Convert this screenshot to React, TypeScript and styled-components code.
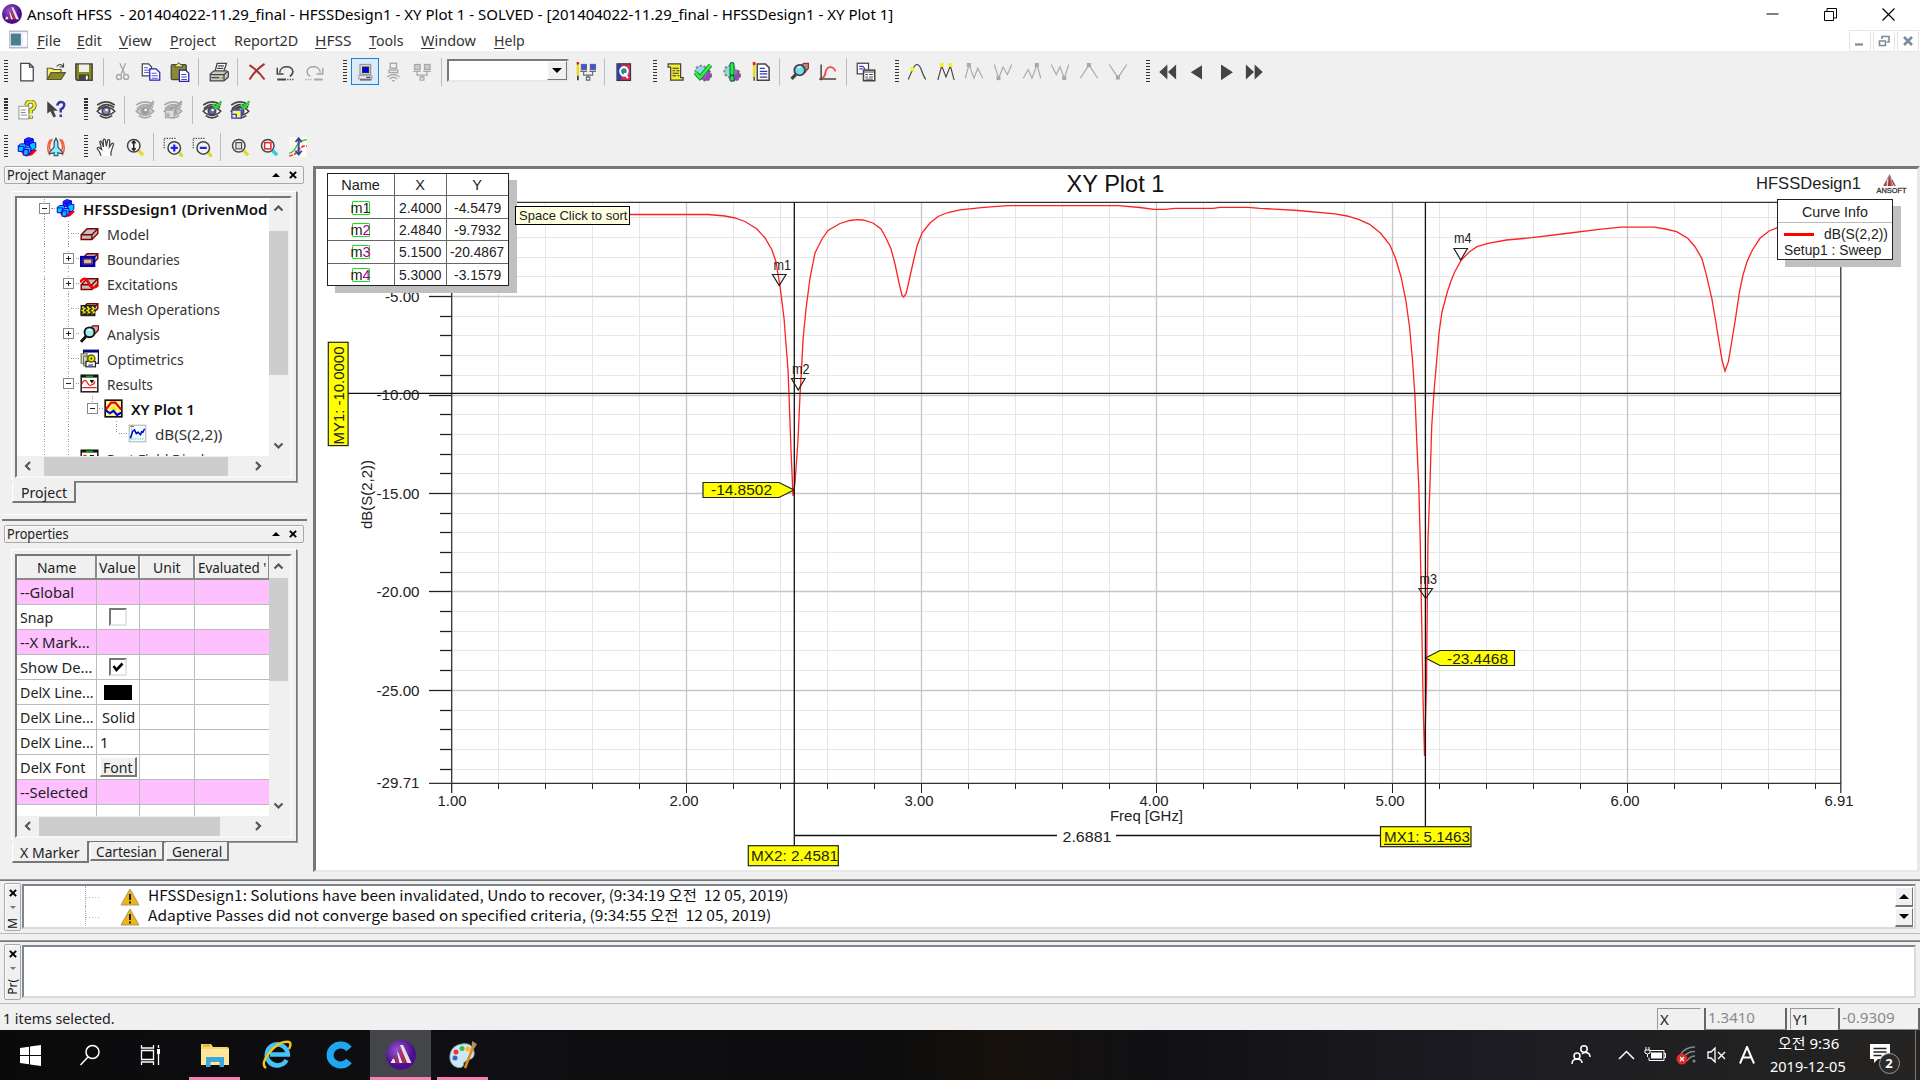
import React, { useLayoutEffect, useRef, useState } from "react";
import styled, { createGlobalStyle, css } from "styled-components";

const UI = `"Noto Sans", "Open Sans", "Noto Sans CJK KR", sans-serif`;
const PLOT = `"Liberation Sans", "Noto Sans CJK KR", sans-serif`;

const Global = createGlobalStyle`
  * { box-sizing: border-box; }
  body { margin: 0; background: #f0f0f0; overflow: hidden; }
`;

/* ---------- text squeezed to a fixed advance width ---------- */
const FitBox = styled.span<{ $w: number }>`
  display: inline-block;
  width: ${(p) => p.$w}px;
  flex: none;
  white-space: pre;
`;
const FitInner = styled.span`
  display: inline-block;
  transform-origin: 0 50%;
`;
const Fit = ({ w, children }: { w: number; children: React.ReactNode }) => {
  const ref = useRef<HTMLSpanElement>(null);
  const [k, setK] = useState(1);
  useLayoutEffect(() => {
    if (ref.current) setK(w / ref.current.offsetWidth);
  }, [w]);
  return (
    <FitBox $w={w}>
      <FitInner ref={ref} style={{ transform: `scaleX(${k})` }}>{children}</FitInner>
    </FitBox>
  );
};

/* ---------- icons ---------- */
const D = "#444";
const G = "#a8a8a8";
const eye = (c: string, iris: string) => (
  <g fill="none" stroke={c} strokeWidth="1.3">
    <path d="M1 4Q8-1 15 4M1.5 7Q8 1 14.5 6" />
    <path d="M1 9Q8 2 15 9Q8 15.500 1 9Z" fill={c === G ? "#ccc" : "#fff"} />
    <circle cx="8" cy="8.700" r="3" fill={iris} />
    <circle cx="8.500" cy="8" r="1" fill="#fff" stroke="none" />
    <path d="M3 12.500Q8 16 13 12.500" />
  </g>
);
const cubes = (
  <g strokeWidth=".8" stroke="#0000e0">
    <path d="M3 12l4 3.500 5-1 4-4-2-1z" fill="#f00" stroke="none" />
    <path d="M6 2l3-1.500 4 1v4l-3 1.500-4-1z" fill="#22f" />
    <path d="M1 7l2-1.500h4v5l-1 1H1z" fill="#0cf" />
    <path d="M10 6l2-1.500h3v4l-2 2h-3z" fill="#0cf" />
    <path d="M5 9.500l2-1.500h4v4l-2 2.500H5z" fill="#2af" />
    <path d="M6 3.500h3.500v3.500M10 3l3-1M1 7.500h4.500v4M5 10h4v4" fill="none" />
  </g>
);
const brick = (
  <g stroke="#800000" strokeWidth="1.200">
    <path d="M1 9l5-5h9v4l-5 5H1z" fill="#c0c0c0" />
    <path d="M1 9h9v4M10 9l5-5" fill="none" />
  </g>
);
const mag = (c: string, inner: React.ReactNode, handle = "#dede20", x = 7, y = 7) => (
  <g>
    <path d={`M${x + 4} ${y + 4}l3.500 3.500`} stroke={handle} strokeWidth="2.800" />
    <circle cx={x} cy={y} r="5" fill="#f4f4f4" stroke={c} strokeWidth="1.200" />
    {inner}
  </g>
);
const net = (c: string, s: string) => (
  <g fill="none" stroke={c} strokeWidth="1">
    <rect x="2" y="2" width="4.500" height="4" fill={s} /><rect x="10" y="2" width="4.500" height="4" fill={s} />
    <path d="M1 7.500h6M9 7.500h6M4 8v2.500h8V8M8 10.500v2" /><rect x="6.500" y="12" width="3" height="2.500" />
  </g>
);
const gears = (
  <g>
    <circle cx="10" cy="10.500" r="4.500" fill="#a040c0" stroke="#666" strokeDasharray="2 1.300" strokeWidth="1.300" />
    <circle cx="6.500" cy="7.500" r="4.600" fill="#8dd" stroke="#888" strokeDasharray="2 1.300" strokeWidth="1.600" />
  </g>
);
const peaks = (d: string, c: string, marks: number[][], m: string) => (
  <g><path d={d} fill="none" stroke={c} strokeWidth=".9" />
    {marks.map(([x, y]) => <rect key={x} x={x - 1.700} y={y - 1.700} width="3.200" height="3.200" fill={m} />)}</g>
);

const icons: Record<string, React.ReactNode> = {
  new: <path d="M3 1h7l3 3v11H3zM10 1v3h3" fill="#fff" stroke={D} />,
  open: <g stroke="#554" strokeWidth=".9"><path d="M1 14V5h4l1 1h6v3" fill="#f6ef6a" /><path d="M1 14l3-5.500h11.500L12 14z" fill="#8b8a1d" /><path d="M8.500 3.500q3-3 5 0M14 1v3h-3" fill="none" stroke={D} /></g>,
  save: <g><path d="M1.500 1.500h13v13h-12l-1-1z" fill="#8a8a18" stroke={D} strokeWidth="1.200" /><rect x="4" y="2" width="8" height="6" fill="#eee" /><rect x="4" y="10" width="8" height="4.500" fill="#444" /><rect x="9.500" y="11" width="1.500" height="3" fill="#fff" /></g>,
  cut: <g fill="none" stroke={G} strokeWidth="1.100"><path d="M5.500 1l4 9M10 1L6.500 10" /><circle cx="4.800" cy="12" r="2" /><circle cx="10.500" cy="12" r="2" /></g>,
  copy: <g fill="#fff"><path d="M1 1.500h5l2.500 2.500v7H1z" stroke={D} /><path d="M7 5.500h5l3 3v6H7z" stroke="#22b" /><path d="M2.500 4.500h3M2.500 6.500h4M2.500 8.500h4M8.500 9h4M8.500 11h5M8.500 13h5" stroke="#55c" strokeWidth=".8" /></g>,
  paste: <g><rect x="1" y="2" width="12" height="12" rx="1" fill="#8b8a30" stroke={D} /><path d="M4 4V2h1.500Q7-.5 8.500 2H10v2z" fill="#e8e060" stroke={D} strokeWidth=".8" /><path d="M7.500 6.500h5l2.500 2.500v6.500H7.500z" fill="#fff" stroke="#22a" /><path d="M9 10h4M9 12h4.500M9 14h4.500" stroke="#44b" strokeWidth=".8" /></g>,
  print: <g stroke={D}><path d="M5 7l1.500-6H14l-2 6" fill="#fff" /><path d="M1 9.500L4 7h10l1.500 1v4L12 15H1z" fill="#c8c8c8" /><path d="M1 10h11l3-2.500M12 10v5M2 12.500h9M7 3h5M6.500 5h5" fill="none" /><path d="M8 12.500h2.500" stroke="#dd0" /></g>,
  del: <path d="M2 2.500Q9 7 14 14M14 1.500Q7 6 2 14" stroke="#a83232" strokeWidth="1.600" fill="none" />,
  undo: <g fill="none" stroke={D} strokeWidth="1.200"><path d="M3 8.500C3 3 13 2 13.500 7.500Q13.500 10 11 11.500M1 4.500v5h5" /><path d="M1 14h7" strokeWidth="1.600" /><path d="M9 14h6" strokeDasharray="1 1" /></g>,
  redo: <g fill="none" stroke={G} strokeWidth="1.200"><path d="M13 8.500C13 3 3 2 2.500 7.500Q2.500 10 5 11.500M15 4.500v5h-5" /><path d="M8 14h7" strokeWidth="1.600" /><path d="M1 14h6" strokeDasharray="1 1" /></g>,
  pc: <g><rect x="4" y="2" width="8.500" height="8" fill="#e0e0e0" stroke="#999" /><rect x="6" y="4" width="5" height="4.500" fill="#00e" stroke="#222" strokeWidth=".7" /><rect x="3" y="11" width="10.500" height="2.500" fill="#f0f0f0" stroke="#999" strokeWidth=".8" /><path d="M4 14.300h9M9 12.300h3.500" stroke="#555" strokeWidth=".9" /></g>,
  remote: <g fill="none" stroke={G} strokeWidth="1.100"><rect x="5" y="1" width="5" height="4" /><rect x="4" y="6.500" width="7" height="2" /><path d="M2.500 12Q7.500 8 12.500 12M4.500 13.500Q7.500 11 10.500 13.500M6.500 15h2" /></g>,
  net: net(G, "#ccc"),
  netEdit: <g><g transform="translate(2.500 0) scale(.9 1)">{net("#667", "#35f")}</g><path d="M1.500 1v10" stroke="#e8d820" strokeWidth="2" /><path d="M1.500 0v2" stroke="#e02020" strokeWidth="2" /><path d="M1.500 11v3.500" stroke="#333" strokeWidth="1.300" /></g>,
  queue: <g transform="translate(1.500 .5) scale(.84 .95)"><rect x="1" y="1" width="13" height="14" fill="#d03050" stroke="#334" /><path d="M1.500 1.500h3.500v13H1.500z" fill="#2244b0" /><circle cx="7.700" cy="7.300" r="3.600" fill="#208aa0" stroke="#fff" strokeWidth="1.900" /><path d="M8 9l3.500 4" stroke="#fff" strokeWidth="1.800" /></g>,
  script: <g><path d="M2.500 1.500h10v11h2v2H4.500V4h-2z" fill="#f4ee30" stroke={D} /><path d="M6 5h5M6 7h2M9 7h2.500M6 9h5M6 11h3M10 11h1.500" stroke="#333" strokeWidth=".9" /></g>,
  check: <g>{gears}<path d="M2 8.500l3.500 4L14 2.500" stroke="#173" strokeWidth="3.600" fill="none" /><path d="M2 8.500l3.500 4L14 2.500" stroke="#3e4" strokeWidth="2.200" fill="none" /></g>,
  bang: <g>{gears}<path d="M8 2v7.500M8 12.300v1.500" stroke="#154" strokeWidth="4" strokeLinecap="round" /><path d="M8 2v7M8 12.500v1" stroke="#2e4" strokeWidth="2.500" strokeLinecap="round" /></g>,
  notes: <g><path d="M5 1.500h6.500l3 3v10H5z" fill="#fff" stroke={D} strokeWidth="1.200" /><path d="M7 5h4M7 7.500h6M7 9.500h6M7 12h6" stroke="#33b" /><path d="M2.500 1.500v11" stroke="#e8d820" strokeWidth="2" /><path d="M2.500 0v2.500" stroke="#e22" strokeWidth="2.200" /><path d="M2.500 12v3" stroke="#333" /></g>,
  solve: <g><path d="M9 3l3-2h3.500v4L13 8z" fill="#b88" stroke="#933" /><circle cx="8.500" cy="6.500" r="4.200" fill="#7de" stroke={D} strokeWidth="1.500" /><path d="M5.500 10L2 13.500" stroke={D} strokeWidth="2.600" /><path d="M7 5q1-1.500 2.500-1" stroke="#fff" fill="none" /></g>,
  plot: <g fill="none"><path d="M2.500 2v12.500M1 13.500h13.500" stroke={D} strokeWidth="1.200" /><path d="M3.500 13Q6 11 6 8Q7 4 10 4Q13 4.500 14 7.500" stroke="#f44" strokeWidth="1.400" /></g>,
  copies: <g stroke={D} fill="#fff"><rect x="1" y="1" width="9" height="8.500" /><path d="M2.500 3.500h3l2 2.500M2.500 5.500h3" stroke="#44d" fill="none" /><rect x="6" y="6.500" width="9" height="8.500" strokeWidth="1.200" /><path d="M6 8h9M7.500 10h2M10.500 10h3M7.500 12h2M10.500 12h3M7.500 13.700h6" strokeWidth=".8" /></g>,
  pk1: peaks("M1 14Q4 7 5 5Q8-1 11 5Q13 11 15 14", D, [[4.300, 6]], "#f6f020"),
  pk2: peaks("M1.500 14.500L4.500 3 8 12 11.500 3 14.500 14.500", D, [[4.700, 2.500], [11.500, 2.500]], "#f6f020"),
  pk3: peaks("M1 13L4 2 8 13 11 5 15 13", G, [[4, 2.500]], G),
  pk4: peaks("M1 2L4.500 13 8 4 11.500 10 15 2", G, [[4.500, 13]], G),
  pk5: peaks("M1 13L5 6 8 13 12 2 15 13", G, [[12, 2.500]], G),
  pk6: peaks("M1 2L5 10 8 4 11.500 13 15 2", G, [[11.500, 13]], G),
  pk7: peaks("M1 13L8 2.500 15 13", G, [[8, 2.500]], G),
  pk8: peaks("M1 2L8 12.500 15 2", G, [[8, 12.500]], G),
  rew: <path d="M7.500 2v12L1 8zM14.500 2v12L8 8z" fill={D} />,
  prev: <path d="M12 2.500v11.500L3 8.200z" fill={D} />,
  next: <path d="M4 2v12.500L13.500 8.200z" fill={D} />,
  ffw: <path d="M1.500 2v12L8 8zM8.500 2v12L15 8z" fill={D} />,
  help: <g><path d="M1.500 5h8v10h-8z" fill="#fff" stroke="#aaa" /><path d="M3 8h4M3 10h4M3 12h5" stroke="#888" strokeWidth=".8" /><path d="M7.500 4.500Q8 1 11 1.200 14.500 1.500 14 5 13.500 7 11 8v2.500M11 12.500v2.500" fill="none" stroke="#554" strokeWidth="3.200" /><path d="M7.500 4.500Q8 1 11 1.200 14.500 1.500 14 5 13.500 7 11 8v2.500M11 12.500v2" fill="none" stroke="#f2ea20" strokeWidth="2.100" /></g>,
  whats: <g><path d="M1 1v10l2.500-2L6 14l2-1-2-4.500h3.500z" fill={D} /><path d="M9 4.500Q9.500 1.500 12 1.500 15 2 14.500 4.500 14 6.500 11.800 7.500V10M11.800 11.500v2" fill="none" stroke="#3238a8" strokeWidth="2" /></g>,
  eye: eye(D, "#88c"),
  eyeG: <g>{eye(G, "#999")}<path d="M9 4l2 2 4-5" stroke={G} strokeWidth="2" fill="none" /></g>,
  eyeGB: <g>{eye(G, "#999")}<path d="M2 8h7v6H2zM4 10v4M2 12h4" stroke={G} fill="#ddd" /><path d="M9 4l2 2 4-5" stroke={G} strokeWidth="2" fill="none" /></g>,
  eyeC: <g>{eye(D, "#66b")}<path d="M8.500 3.500l2.500 3L15.500 1" stroke="#2d3" strokeWidth="2" fill="none" /></g>,
  eyeCB: <g>{eye(D, "#66b")}<path d="M1.500 8h7.500v6.500H1.500z" stroke="#33d" fill="#fafa50" /><path d="M2 11.500h3v3" stroke="#33d" fill="#eee" /><path d="M8.500 3.500l2.500 3L15.500 1" stroke="#2d3" strokeWidth="2" fill="none" /></g>,
  cubes,
  jet: <g fill="none"><path d="M3.500 2Q-.5 8 3 14.500M12.500 2q4 6 .5 12.500M5 1.500Q1.500 7 3.500 11M11 1.500q3.500 5.500 1.500 9.500" stroke="#f06040" strokeWidth="1.200" /><path d="M8 1l1.500 3v4l3.500 4v1.500l-3.500-1V15h-3v-2.500l-3.500 1V12l3.500-4V4z" fill="#8ef" stroke="#345" strokeWidth=".9" /></g>,
  hand: <path d="M4 15Q3.500 12 1 9.500 1 8 2.500 8.500L4.500 10 3 4Q3.500 2.500 4.500 4L6 8 5.800 2.500Q6.500 1 7.500 2.500L8.300 7.500 9.300 2.500Q10.500 1.500 11 3L10.700 8 12.800 5Q14 4.500 14 6L12 12v3" fill="#fff" stroke={D} strokeWidth="1" />,
  zoomV: mag(D, <path d="M7 3.500v7M5.500 5L7 3.300 8.500 5M5.500 9L7 10.700 8.500 9" stroke="#222" fill="none" strokeWidth="1.200" />),
  zoomIn: <g><path d="M1 9V1h9" stroke={D} strokeDasharray="1 1" fill="none" />{mag(D, <path d="M6.200 8.700h5.600M9 6v5.500" stroke="#22e" strokeWidth="1.800" />, "#dede20", 9, 8.700)}</g>,
  zoomOut: <g><path d="M1 9V1h9" stroke={D} strokeDasharray="1 1" fill="none" />{mag(D, <path d="M6.200 8.700h5.600" stroke="#22e" strokeWidth="1.800" />, "#dede20", 9, 8.700)}</g>,
  zoomFit: mag(D, <rect x="4.700" y="4.500" width="4.600" height="5" fill="#ddd" stroke={D} strokeWidth=".9" />),
  zoomSel: mag(D, <rect x="4.500" y="4.500" width="5" height="5" fill="#fff" stroke="#e22" strokeWidth="1.200" />, "#3cd"),
  axes: <g fill="none"><path d="M1 0h14v16H1z" fill="#fdfdf6" /><path d="M1 13Q5 12 7 7Q9 3 15 2" stroke="#3c3" strokeWidth="1.200" /><path d="M1 15Q5 15 8 11Q11 7 15 7" stroke="#e33" strokeWidth="1.400" strokeDasharray="3 1" /><path d="M8.500 1.500v12M6 4l2.500-3L11 4M6 11l2.500 3L11 11" stroke="#3a42a0" strokeWidth="1.500" /></g>,
  brick,
  bound: <g>{brick}<rect x="1.200" y="7" width="10.500" height="7" fill="#c0c0c0" stroke="#0000b0" strokeWidth="2.400" /><rect x="3" y="8.500" width="7" height="4" fill="#c0c0c0" stroke="#800000" strokeWidth=".8" /></g>,
  excite: <g>{brick}<path d="M0 7Q4 1 7 7Q10 15 15.500 9" fill="none" stroke="#f00" strokeWidth="2.200" /></g>,
  mesh: <g>{brick}<rect x=".5" y="5" width="12.500" height="9.500" fill="#222" /><path d="M2 6.500l2 1.500L2 9.500l2 1.500L2 12.500M6 6.500l2 1.500L6 9.500l2 1.500L6 12.500M10 6.500l2 1.500-2 1.500 2 1.500-2 1.500" stroke="#ee0" strokeWidth="1.500" fill="none" strokeDasharray="1.700 .7" /></g>,
  analysis: <g><path d="M8 4l3-2.500h4.500V5L12 9z" fill="#caa" stroke="#800000" /><circle cx="8" cy="7" r="4.200" fill="#9ee" stroke="#111" strokeWidth="1.600" /><path d="M5 10.500L.8 15" stroke="#111" strokeWidth="2.400" /><path d="M6.500 5.500q1.500-1.500 3 0" stroke="#fff" fill="none" /></g>,
  optim: <g><rect x="3" y="1" width="12.500" height="11" fill="#fff" stroke="#113" /><path d="M3 2h12.500" stroke="#008" strokeWidth="2" /><path d="M1 4h5v8H1zM3 6h5v8H3z" fill="#ddd" stroke="#775" /><rect x="5" y="10.500" width="8" height="4.500" fill="#fff" stroke="#222" /><circle cx="9.500" cy="8" r="3" fill="#ee0" stroke="#660" strokeWidth="1.300" /><circle cx="9.500" cy="8" r=".9" fill="#220" /><path d="M7 13.500h4" stroke="#55f" strokeWidth="1.300" /></g>,
  results: <g><rect x="1" y="1" width="14" height="14" fill="#fff" stroke="#111" strokeWidth="1.200" /><path d="M1 2h14" stroke="#111" strokeWidth="2" /><path d="M5 2h6" stroke="#0a0" strokeWidth="1.300" /><path d="M1.500 8.500Q4 3 6 7t4 2q2 0 2.500-3M2 11.500h12" fill="none" stroke="#e22" /><path d="M8 5h4l-2 3z" fill="#111" /></g>,
  xy: <g><rect x="1" y="1" width="14" height="14" fill="#fff68a" stroke="#111" strokeWidth="1.400" /><path d="M1.500 9L6 3h3.500l5 6" fill="none" stroke="#e00" strokeWidth="1.800" /><path d="M5 8l3-2 3 2-2 3z" fill="#ee0" /><path d="M1.500 9.500L5 12l3-2 3 3.500 3.500-2" fill="none" stroke="#00d" strokeWidth="1.800" /></g>,
  trace: <g><rect x="1" y="1" width="14" height="14" fill="#eff" stroke="#aaa" strokeWidth=".8" /><path d="M3 2v12M2 12.500h12" stroke="#6cc" strokeDasharray="1 1" /><path d="M2 12l2-6 1.500-1 1.500 3 1.500-1 2 2 1-2.500 1 .5L14 4" fill="none" stroke="#00c" strokeWidth="1.300" /><path d="M2 2h3" stroke="#e44" /></g>,
  doc: <g><rect x="0" y="1" width="16" height="14" fill="#eef" stroke="#aab" /><rect x="1.500" y="3" width="8.500" height="10" fill="#47808a" /><rect x="12" y="3" width="3" height="10" fill="#fff" /></g>,
};

const Icon = ({ n, s = 20 }: { n: string; s?: number }) => (
  <svg width={s} height={s} viewBox="0 0 16 16" aria-hidden>{icons[n]}</svg>
);
const Ball = ({ w, h }: { w: number; h: number }) => (
  <svg width={w} height={h} viewBox="0 0 30 30" preserveAspectRatio="none">
    <defs><radialGradient id="ball" cx=".4" cy=".35"><stop offset="0" stopColor="#9a5ad0" /><stop offset="1" stopColor="#4a0f8c" /></radialGradient></defs>
    <ellipse cx="15" cy="15" rx="15" ry="15" fill="url(#ball)" />
    <path d="M14 5h3l8.500 18h-4.500z" fill="#e8e0e4" /><path d="M12.500 8.500l2 1L20.500 23h-3.500z" fill="#c22f3c" />
    <path d="M11 12l1.500 1 4 10h-3z" fill="#f0e8ea" /><path d="M9 15l1.500 1.500L13 23h-2.800z" fill="#c22f3c" /><path d="M7 18.500l1.500 1 1 3.500H4.500z" fill="#f4eef0" />
  </svg>
);

/* ---------- shell ---------- */
const Screen = styled.div`
  width: 1920px; height: 1080px; display: flex; flex-direction: column;
  background: #f0f0f0; font-family: ${UI}; font-size: 15px; color: #222; overflow: hidden;
`;
const TitleBar = styled.div`
  height: 28px; background: #fff; display: flex; align-items: center; padding-left: 2px; gap: 5px; color: #000;
`;
const WinButtons = styled.div`
  margin-left: auto; display: flex; height: 28px; align-items: center; gap: 45px; padding-right: 25px;
`;
const MenuBar = styled.div`
  height: 23px; background: #fff; display: flex; align-items: center; padding-left: 9px; color: #333;
`;
const MenuItem = styled.div<{ $gap: number }>`
  margin-left: ${(p) => p.$gap}px; line-height: 20px;
  u { text-underline-offset: 2px; text-decoration-thickness: 1px; }
`;
const MdiButtons = styled.div`
  margin-left: auto; display: flex; gap: 2px; padding: 2px 1px 0 0; height: 23px;
`;
const MdiButton = styled.div`
  width: 22px; height: 22px; border: 1px solid #e4e4e4; display: flex; align-items: center; justify-content: center;
`;
const Toolbars = styled.div`height: 115px; padding-top: 2px; display: flex; flex-direction: column;`;
const ToolRow = styled.div`height: 37.700px; display: flex; align-items: center;`;
const Grip = styled.div<{ $first?: boolean }>`
  width: ${(p) => (p.$first ? 12.500 : 21.800)}px; height: 24px; padding-left: ${(p) => (p.$first ? 4 : 14)}px; flex: none;
  &::before { content: ""; display: block; width: 4px; height: 24px; background: repeating-linear-gradient(#333 0 1.500px, #f0f0f0 1.500px 3px); }
`;
const Tool = styled.div<{ $on?: boolean }>`
  width: 28.700px; height: 27px; flex: none; display: flex; align-items: center; justify-content: center;
  ${(p) => p.$on && css`background: #dcebf8; border: 1px solid #1883d7;`}
`;
const Sep = styled.div`
  width: 9.800px; height: 28px; flex: none; padding-left: 4px;
  &::before { content: ""; display: block; width: 1px; height: 28px; background: #bdbdbd; }
`;
const Combo = styled.div`
  width: 122px; height: 23px; background: #fff; border: 2px solid; border-color: #7a7a7a #e8e8e8 #e8e8e8 #7a7a7a;
  display: flex; justify-content: flex-end; flex: none; margin: 0 2px 2px 1px;
`;
const ComboArrow = styled.div`
  width: 20px; height: 19px; background: #f0f0f0; border: 1px solid; border-color: #fff #777 #777 #fff;
  display: flex; align-items: center; justify-content: center;
`;
const Tri = styled.i<{ $d: "up" | "down"; $s?: number; $c?: string }>`
  width: 0; height: 0; border: ${(p) => p.$s ?? 5}px solid transparent; 
  ${(p) => p.$d === "up"
    ? css`border-bottom-color: ${p.$c ?? "#000"}; border-top-width: 0;`
    : css`border-top-color: ${p.$c ?? "#000"}; border-bottom-width: 0;`}
`;

/* ---------- docked panels ---------- */
const Main = styled.div`height: 713px; display: flex;`;
const Side = styled.div`
  width: 313px; flex: none; padding-left: 4px; display: flex; flex-direction: column;
`;
const PanelHead = styled.div`
  width: 300px; height: 18px; border: 1px solid #a9a9a9; border-radius: 2px; display: flex; align-items: center;
  padding: 0 6px 0 2px; font-size: 13.500px; line-height: 16px; flex: none; box-shadow: inset 1px 1px #fff;
`;
const HeadTools = styled.span`margin-left: auto; display: flex; gap: 9px; align-items: center;`;
const Frame = styled.div<{ $h: number; $mt: number }>`
  width: 286px; height: ${(p) => p.$h}px; margin: ${(p) => p.$mt}px 0 0 7px; padding: 4px 4px 3px 3px; flex: none;
  border: 1px solid; border-color: #fff #777 #777 #fff; box-shadow: 1px 1px #9a9a9a;
`;
const Well = styled.div`
  height: 100%; border: 2px solid; border-color: #777 #f8f8f8 #f8f8f8 #777; background: #f0f0f0; display: grid;
  grid-template-columns: 1fr 21px; grid-template-rows: 1fr 20px; overflow: hidden;
`;
const View = styled.div`background: #fff; overflow: hidden; min-width: 0; min-height: 0;`;
const Tree = styled.div`margin-top: -2px;`;
const VScroll = styled.div`display: flex; flex-direction: column; align-items: center; justify-content: space-between; padding-right: 2px;`;
const HScroll = styled.div`display: flex; align-items: center; padding-left: 5px;`;
const Thumb = styled.div<{ $w?: number; $h?: number; $m?: string }>`
  background: #cdcdcd; width: ${(p) => p.$w ?? 19}px; height: ${(p) => p.$h ?? 19}px; margin: ${(p) => p.$m ?? 0};
`;
const Tabs = styled.div`display: flex; align-items: flex-start; padding-left: 8px; flex: none;`;
const Tab = styled.div<{ $w: number; $on?: boolean }>`
  width: ${(p) => p.$w}px; height: ${(p) => (p.$on ? 22 : 19)}px; border: 1px solid; border-color: transparent #777 #777 #fff;
  border-width: 0 2px 2px 1px; background: #f0f0f0; display: flex; align-items: center; justify-content: center;
  font-size: 15px; line-height: 16px; margin-right: 2px; 
  ${(p) => p.$on && css`margin-top: -1px; margin-right: 1px; padding-top: 2px;`}
`;
const Splitter = styled.div`
  height: 7px; margin: 11px 0 4px -2px; width: 305px; border-top: 1px solid #fff; border-bottom: 2px solid #777; flex: none;
`;

/* tree */
const Row = styled.div<{ $b?: boolean }>`
  height: 25px; display: flex; align-items: center; padding-left: 15px; color: ${(p) => (p.$b ? "#111" : "#333")};
  font-weight: ${(p) => (p.$b ? 600 : 400)};
`;
const Guide = styled.div<{ $k: string }>`
  width: 24px; height: 25px; flex: none; display: grid; place-items: center;
  background-image:
    ${(p) => ("vtpm".includes(p.$k) ? "repeating-linear-gradient(#999 0 1px, #fff 1px 2.500px)" : "none")},
    ${(p) => ("xl".includes(p.$k) ? "repeating-linear-gradient(#999 0 1px, #fff 1px 2.500px)" : "none")},
    ${(p) => ("tpmxl".includes(p.$k) ? "repeating-linear-gradient(90deg, #999 0 1px, #fff 1px 2.500px)" : "none")};
  background-size: 1px 25px, 1px 13px, 12px 1px;
  background-position: 12px 0, 12px 0, 12px 12px;
  background-repeat: no-repeat;
`;
const Expander = styled.div<{ $plus?: boolean }>`
  width: 11px; height: 11px; border: 1px solid #888;
  background:
    linear-gradient(#222, #222) center / 5px 1px no-repeat,
    ${(p) => (p.$plus ? "linear-gradient(#222, #222) center / 1px 5px no-repeat," : "")}
    #fff;
`;
const IconSlot = styled.div`
  width: 20px; height: 20px; margin-right: 7px; flex: none; display: flex; align-items: center;
`;
const tree: [string, string, string, number, boolean?][] = [
  ["m", "cubes", "HFSSDesign1 (DrivenMod", 184, true],
  ["vt", "brick", "Model", 42],
  ["vp", "bound", "Boundaries", 73],
  ["vp", "excite", "Excitations", 71],
  ["vt", "mesh", "Mesh Operations", 113],
  ["vp", "analysis", "Analysis", 53],
  ["vt", "optim", "Optimetrics", 77],
  ["vm", "results", "Results", 46],
  ["vvx", "xy", "XY Plot 1", 64, true],
  ["vv l", "trace", "dB(S(2,2))", 67],
  ["vv", "results", "Port Field Display", 112],
];

/* property grid */
const Grid = styled.div`display: grid; grid-template-columns: 80px 43px 55px 75px; grid-template-rows: 25px; grid-auto-rows: 25px; margin-top: -1px;`;
const HeadCell = styled.div`
  border-right: 2px solid #8a8a8a; border-bottom: 2px solid #8a8a8a; box-shadow: inset 1px 1px #fff; background: #f0f0f0;
  display: flex; align-items: center; justify-content: center; overflow: hidden;
`;
const Cell = styled.div<{ $pink?: boolean; $c?: boolean }>`
  border-right: 1px solid #bbb; border-bottom: 1px solid #bbb; background: ${(p) => (p.$pink ? "#ffc0ff" : "#fff")};
  display: flex; align-items: center; padding-left: ${(p) => (p.$c ? 0 : 3)}px; justify-content: ${(p) => (p.$c ? "center" : "flex-start")};
  overflow: hidden; white-space: nowrap;
`;
const Check = styled.div`
  width: 18px; height: 18px; background: #fff; border: 2px solid; border-color: #777 #e4e4e4 #e4e4e4 #777; display: grid; place-items: center;
`;
const Swatch = styled.div`width: 28px; height: 15px; background: #000;`;
const FontButton = styled.div`
  width: 37px; height: 20px; background: #f0f0f0; border: 1px solid; border-color: #fff #777 #777 #fff; border-width: 1px 2px 2px 1px;
  display: flex; align-items: center; justify-content: center;
`;
const props: [string, number, React.ReactNode, boolean?][] = [
  ["--Global", 54, null, true],
  ["Snap", 33, <Check key="c" />],
  ["--X Mark...", 70, null, true],
  ["Show De...", 72, <Check key="d"><svg width="12" height="12" viewBox="0 0 12 12"><path d="M1.500 5l3 4L10.500 2.500" stroke="#000" strokeWidth="2.600" fill="none" /></svg></Check>],
  ["DelX Line...", 74, <Swatch key="s" />],
  ["DelX Line...", 74, <Fit key="so" w={33}>Solid</Fit>],
  ["DelX Line...", 74, "1"],
  ["DelX Font", 66, <FontButton key="f"><Fit w={30}>Font</Fit></FontButton>],
  ["--Selected", 68, null, true],
  ["", 0, null],
];

const Chevron = ({ r }: { r: number }) => (
  <svg width="11" height="20" viewBox="-5.500 -10 11 20"><path d="M-4 2.500L0-1.500 4 2.500" transform={`rotate(${r})`} fill="none" stroke="#555" strokeWidth="2.200" /></svg>
);
const Cross = ({ s = 9 }: { s?: number }) => (
  <svg width={s} height={s} viewBox="0 0 9 9"><path d="M1 1l7 7M8 1L1 8" stroke="#000" strokeWidth="2.300" /></svg>
);

/* ---------- plot ---------- */
const PlotFrame = styled.div`
  flex: 1; height: 706px; border: 3px solid; border-color: #777 #e8e8e8 #e8e8e8 #777; border-width: 3px 3px 2px 3px; background: #fff; position: relative;
  svg.chart { display: block; }
`;
const Overlay = styled.div<{ $x: number; $y: number }>`
  position: absolute; left: ${(p) => p.$x - 316}px; top: ${(p) => p.$y - 169}px; font-family: ${PLOT};
`;
const MarkerTable = styled.div`
  width: 182px; height: 113px; display: grid; grid-template-columns: 66px 51px 1fr; grid-template-rows: repeat(5, 1fr);
  border: 1px solid #222; background: #666; gap: 1px; box-shadow: 8px 7px #c0c0c0; font-size: 14.500px; color: #222;
  > div { background: #fff; display: flex; align-items: center; justify-content: center; padding-top: 1px; }
`;
const MTag = styled.span`
  border: 1px solid #1be01b; border-radius: 1px; width: 18px; height: 14px; line-height: 13px; display: inline-flex; justify-content: center;
  i { font-style: normal; color: #a000a0; }
`;
const Tip = styled.div`
  width: 115px; height: 19px; background: #ffffe1; border: 1px solid #000; display: flex; align-items: center; padding-left: 3px;
  font-size: 13px; color: #222;
`;
const Legend = styled.div`
  width: 116px; height: 61px; background: #fff; border: 1px solid #222; box-shadow: 8px 7px #c0c0c0; font-size: 14.500px; color: #222;
  display: flex; flex-direction: column;
`;
const LegendHead = styled.div`height: 23px; border-bottom: 1px solid #bbb; display: flex; align-items: center; justify-content: center; padding-top: 1px;`;
const LegendRow = styled.div`display: flex; align-items: center; height: 22px; padding-left: 6px; gap: 10px;
  &::before { content: ""; width: 30px; height: 3px; background: #f00; }`;
const LegendNote = styled.div`padding-left: 6px; line-height: 10px; height: 12px;`;

const px = (g: number) => 451.800 + (g - 1) * 235.050;
const py = (db: number) => 198.500 + db * 19.690;
const curve = [
  [452, 217], [509, 216], [560, 214.500], [708, 214.500], [725, 216], [735, 218], [745, 221.500], [757, 229], [765, 238], [772, 250], [776, 262], [780, 286],
  [784, 318], [788, 370], [789, 395], [791, 450], [793, 496], [795, 483], [798, 440], [800, 395], [801.500, 370], [803, 340], [806, 309], [810, 278],
  [815, 253], [822, 239], [828, 230.500], [840, 223.500], [850, 220.500], [857, 219.600], [863, 220], [873, 223], [881, 229], [886, 238], [891, 249],
  [895, 264], [899, 283], [902, 295.500], [903.500, 297], [906, 294], [909, 281], [913, 263], [917, 246], [922, 233], [930, 223], [938, 216.500],
  [948, 212.500], [960, 209.800], [984, 207.300], [1008, 205.700], [1118, 205.700], [1140, 207.500], [1154, 209.300], [1165, 209.300], [1175, 208.300],
  [1213, 208.300], [1220, 207.300], [1248, 207.300], [1260, 208.300], [1298, 210.500], [1335, 213.800], [1347, 216], [1358.500, 219.300], [1369.600, 224.300],
  [1380.700, 233.300], [1390, 245], [1395.500, 258.300], [1401, 276.700], [1405.800, 300], [1409.500, 326.700], [1412.500, 360], [1415, 396.700],
  [1417, 446.700], [1418.800, 486.700], [1420.200, 540], [1422, 638], [1423, 697], [1424.500, 756], [1425, 740], [1426.600, 680], [1427.300, 600], [1428, 540],
  [1430, 483], [1431.700, 426.700], [1434.300, 388], [1437, 357], [1439, 333], [1442, 312], [1447.300, 292], [1451, 281], [1454.700, 272],
  [1461.300, 260], [1469.500, 251.700], [1477, 246.700], [1488, 243.300], [1506.500, 240], [1532, 237.700], [1562, 234], [1599, 229.300], [1621, 227.200],
  [1654.400, 227.200], [1665.500, 229], [1676.600, 231.700], [1687.700, 238.300], [1695, 246.700], [1701.800, 258.300], [1706, 273.300], [1711.800, 298.300],
  [1715.500, 320], [1719.200, 343], [1722, 360], [1725, 371], [1728.400, 361.700], [1732, 340], [1735.800, 316.700], [1739.500, 291.700], [1743, 275],
  [1747, 261.700], [1752.400, 250], [1760, 238.300], [1769, 231], [1777, 228], [1800, 224],
];
const Txt = ({ x, y, w, s = 15.500, children, ...r }: { x: number; y: number; w: number; s?: number; children: string; [k: string]: unknown }) => (
  <text x={x} y={y} textLength={w} lengthAdjust="spacingAndGlyphs" fontSize={s} fill="#222" {...r}>{children}</text>
);
const Marker = ({ n, tx, ty, x, y, h }: { n: string; tx: number; ty: number; x: number; y: number; h: number }) => (
  <g><Txt x={tx} y={ty} w={17.500} s={14}>{n}</Txt><path d={`M${x - 6.500} ${y}h13.500l-6.800 ${h}z`} fill="none" stroke="#222" strokeWidth="1.200" /></g>
);

const Chart = () => {
  const vs: number[] = []; for (let i = 1; i < 30; i++) vs.push(i);
  const hs: number[] = []; for (let i = 1; i <= 29; i++) hs.push(i);
  const r = (v: number) => Math.floor(v) + 0.5;
  const ry = (v: number) => Math.floor(v - 0.4) + 0.5;
  return (
    <svg className="chart" width="1601" height="701" viewBox="316 169 1601 701" fontFamily="Liberation Sans, sans-serif">
      {vs.filter((i) => i % 5).map((i) => <path key={i} d={`M${r(px(1 + i / 5))} 202V783`} stroke="#e6e6e6" />)}
      {hs.filter((i) => i % 5).map((i) => <path key={i} d={`M452 ${ry(py(i))}H1841`} stroke="#e6e6e6" />)}
      {vs.filter((i) => !(i % 5)).map((i) => <path key={i} d={`M${r(px(1 + i / 5))} 202V783`} stroke="#c6c6c6" strokeWidth="1.300" />)}
      {hs.filter((i) => !(i % 5)).map((i) => <path key={i} d={`M452 ${ry(py(i))}H1841`} stroke="#c6c6c6" strokeWidth="1.300" />)}
      {[0, ...vs].map((i) => <path key={i} d={`M${r(px(1 + i / 5))} 783V${i % 5 ? 789 : 793}`} stroke="#222" />)}
      {hs.map((i) => <path key={i} d={`M${i % 5 ? 440 : 429} ${ry(py(i))}H452`} stroke="#222" strokeWidth="1.300" />)}
      <path d="M429 783.300H1841M1840.800 793V202.300H451.700V793" fill="none" stroke="#333" strokeWidth="1.300" />
      <polyline points={curve.map((p) => p.join(",")).join(" ")} fill="none" stroke="#ff2020" strokeWidth="1.300" />
      <path d="M794.300 202V846M1425.400 202V827M348 393.400H1841M795 835.500H1057M1116 835.500H1380" stroke="#111" strokeWidth="1.300" fill="none" />
      {[5, 10, 15, 20, 25].map((v) => <Txt key={v} x={v === 5 ? 385 : 376.500} y={py(v) + 5} w={v === 5 ? 34.500 : 43}>{`-${v}.00`}</Txt>)}
      <Txt x={376.500} y={788} w={43}>-29.71</Txt>
      {[[438, "1.00"], [670, "2.00"], [905, "3.00"], [1140, "4.00"], [1376, "5.00"], [1611, "6.00"], [1825, "6.91"]].map(([x, t]) => (
        <Txt key={t} x={(x as number) - 0.500} y={806} w={29}>{t as string}</Txt>
      ))}
      <Txt x={1110} y={821} w={73} s={14}>Freq [GHz]</Txt>
      <Txt x={0} y={0} w={69} s={14} transform="translate(372 529) rotate(-90)">dB(S(2,2))</Txt>
      <Txt x={1066.500} y={191.500} w={98} s={24} fill="#111">XY Plot 1</Txt>
      <Txt x={1756} y={188.500} w={105} s={16.500}>HFSSDesign1</Txt>
      <Txt x={1876.500} y={193} w={30} s={7.500} stroke="#444" strokeWidth=".3">ANSOFT</Txt>
      <g transform="translate(1882 174)"><path d="M7.500 0L14 12H1z" fill="#888" /><path d="M7.500 2L9 12H6zM5 5L4.500 12H2z" fill="#c22" /><path d="M5.200 5v7M9.700 4l2 8" stroke="#fff" strokeWidth=".9" /><path d="M10 6l2.500 6" stroke="#c22" /></g>
      <Txt x={1062.500} y={842} w={49} s={15}>2.6881</Txt>
      <Marker n="m1" tx={773.500} ty={270.300} x={779} y={274.500} h={11} />
      <Marker n="m2" tx={792} ty={373.500} x={798} y={378.500} h={11.500} />
      <Marker n="m3" tx={1419.500} ty={583.500} x={1425.500} y={588.500} h={10} />
      <Marker n="m4" tx={1454} ty={243.300} x={1460.500} y={248.500} h={11.500} />
      <g stroke="#222" fill="#ff0" strokeWidth="1.200">
        <path d="M703 482.500H779l15 7.500-15 7.500H703z" /><path d="M1514.500 650.500H1440l-14.500 7.500 14.500 7.500H1514.500z" />
        <rect x="748.300" y="845.700" width="90" height="20" /><rect x="1380.500" y="826.700" width="90.500" height="20" /><rect x="328.300" y="342.300" width="19.800" height="103.300" />
      </g>
      <Txt x={711} y={495} w={61}>-14.8502</Txt>
      <Txt x={1447} y={663.500} w={61}>-23.4468</Txt>
      <Txt x={751} y={861} w={87}>MX2: 2.4581</Txt>
      <Txt x={1384} y={842} w={86}>MX1: 5.1463</Txt>
      <path d="M1384 844.300h86" stroke="#222" strokeWidth="1.200" />
      <Txt x={0} y={0} w={98} transform="translate(344 444.500) rotate(-90)">MY1: -10.0000</Txt>
    </svg>
  );
};

/* ---------- bottom docks ---------- */
const Rule = styled.div<{ $mt?: number }>`height: 2px; margin-top: ${(p) => p.$mt ?? 0}px; flex: none; background: linear-gradient(#aaa, #666);`;
const Dock = styled.div<{ $h: number; $pt: number; $pb: number }>`
  height: ${(p) => p.$h}px; padding: ${(p) => p.$pt}px 4px ${(p) => p.$pb}px 4px; display: flex; gap: 1px; flex: none; border-bottom: 1px solid #bbb;
`;
const DockGrip = styled.div`
  width: 17px; border: 1px solid #a9a9a9; border-radius: 2px; display: flex; flex-direction: column; align-items: center; padding-top: 5px;
  gap: 9px; font-size: 12px; color: #111; overflow: hidden; box-shadow: inset 1px 1px #fff;
`;
const Vert = styled.span`writing-mode: vertical-rl; transform: rotate(180deg); line-height: 12px;`;
const DockBody = styled.div<{ $h: number }>`
  flex: 1; height: ${(p) => p.$h}px; background: #fff; border: 2px solid; border-color: #7d8590 #d8dade #d8dade #7d8590; display: flex; margin-top: 1px;
`;
const Messages = styled.div`flex: 1; padding: 0 0 0 61px; overflow: hidden;`;
const Message = styled.div`
  height: 20px; display: flex; align-items: center; font-family: "Noto Sans CJK KR", sans-serif; font-size: 14.500px; color: #111; line-height: 16px;
  &::before { content: ""; width: 14px; height: 20px; border-left: 1px dotted #aaa; background: linear-gradient(90deg, #bbb 50%, #fff 50%) 0 11px / 3px 1px repeat-x; margin-right: 20px; }
  svg { margin: 2px 8px 0 0; }
`;
const MessageText = styled.span`padding-bottom: 2px;`;
const Spin = styled.div`width: 20px; display: flex; flex-direction: column; gap: 1px; padding: 1px 1px 0;`;
const SpinBtn = styled.div`
  flex: 1; background: #f0f0f0; border: 1px solid; border-color: #fff #777 #777 #fff; border-bottom-width: 2px; display: grid; place-items: center;
`;
const Status = styled.div`height: 26px; flex: none; display: flex; padding-left: 3px; font-size: 15px; align-items: stretch;
  > span:first-child { margin-top: 4px; line-height: 20px; }`;
const StatusCells = styled.div`margin-left: auto; display: flex; gap: 3px; padding-top: 4px;`;
const Pane = styled.div<{ $w: number; $edit?: boolean }>`
  width: ${(p) => p.$w}px; padding-left: 2px; line-height: 20px; border: 1px solid; border-color: #999 transparent transparent #999;
  ${(p) => p.$edit && css`color: #8a8a8a; border-color: transparent #666 #888 #666; border-width: 0 2px 1px 2px; line-height: 19px;`}
`;

/* ---------- taskbar ---------- */
const Taskbar = styled.div`
  height: 50px; flex: none; display: flex; background: linear-gradient(90deg, #0a0a0b 0, #101014 25%, #0c0c0e 45%, #15100b 52%, #101014 60%, #1c1c22 78%, #252422 100%);
  color: #fff; align-items: stretch;
`;
const TaskItem = styled.div<{ $w: number; $on?: boolean; $line?: number }>`
  width: ${(p) => p.$w}px; display: flex; align-items: center; justify-content: center;
  background: ${(p) => (p.$on ? "#444549" : "transparent")};
  ${(p) => p.$line && css`
    background: linear-gradient(#f77fb6, #f77fb6) center bottom / ${p.$line}px 3px no-repeat, ${p.$on ? "#444549" : "transparent"};
  `}
`;
const Tray = styled.div`margin-left: auto; display: flex; align-items: center;`;
const TrayItem = styled.div<{ $w: number }>`width: ${(p) => p.$w}px; display: flex; justify-content: center; align-items: center; flex: none;`;
const Clock = styled.div`
  width: 76px; display: flex; flex-direction: column; align-items: center; gap: 3px; font-size: 14.500px; line-height: 20px; font-family: "Noto Sans", "Noto Sans CJK KR", sans-serif; padding-bottom: 1px;
`;
const Badge = styled.span`
  position: absolute; left: 9px; top: 9px; width: 21px; height: 21px; border-radius: 50%; background: #2b2b2b; border: 1px solid #999;
  font-size: 13px; font-weight: 700; line-height: 18px; text-align: center;
`;
const Notice = styled.div`position: relative; width: 22px; height: 22px;`;
const ShowDesktop = styled.div`width: 5px; height: 50px; border-left: 1px solid #777;`;

const menus: [string, string, number, number][] = [
  ["F", "ile", 9, 24], ["E", "dit", 16, 25], ["V", "iew", 17, 33], ["P", "roject", 18, 46], ["", "Report2D", 18, 64],
  ["H", "FSS", 17, 36], ["T", "ools", 18, 35], ["W", "indow", 17, 55], ["H", "elp", 18, 31],
];
const row1 = "|F new open save - cut copy paste - print - del undo redo | *pc remote net - @ netEdit - queue | script check bang notes - solve plot - copies | pk1 pk2 pk3 pk4 pk5 pk6 pk7 pk8 | rew prev next ffw";
const row2 = "|F help whats | eye - eyeG eyeGB - eyeC eyeCB";
const row3 = "|F cubes jet | hand zoomV - zoomIn zoomOut - zoomFit zoomSel axes";

const Tools = ({ spec }: { spec: string }) => (
  <ToolRow>
    {spec.split(" ").map((t, i) => {
      if (t[0] === "|") return <Grip key={i} $first={t === "|F"} />;
      if (t === "-") return <Sep key={i} />;
      if (t === "@") return <Combo key={i}><ComboArrow><Tri $d="down" /></ComboArrow></Combo>;
      const on = t[0] === "*";
      return <Tool key={i} $on={on}><Icon n={on ? t.slice(1) : t} /></Tool>;
    })}
  </ToolRow>
);
const Head = ({ w, children }: { w: number; children: string }) => (
  <PanelHead><Fit w={w}>{children}</Fit><HeadTools><Tri $d="up" $s={4} /><Cross s={8} /></HeadTools></PanelHead>
);
const Warn = () => (
  <svg width="20" height="18" viewBox="0 0 20 18"><path d="M10 1l9 16H1z" fill="#f0b411" stroke="#a89a6a" /><path d="M10 6v6M10 13.500v2" stroke="#222" strokeWidth="2" /></svg>
);

export default function App() {
  return (
    <Screen>
      <Global />
      <TitleBar>
        <Ball w={20} h={20} />
        <Fit w={866}>Ansoft HFSS  - 201404022-11.29_final - HFSSDesign1 - XY Plot 1 - SOLVED - [201404022-11.29_final - HFSSDesign1 - XY Plot 1]</Fit>
        <WinButtons>
          <svg width="13" height="13"><path d="M.5 6h12" stroke="#000" /></svg>
          <svg width="13" height="13"><path d="M.5 3.500h9v9h-9zM3 3V.5h9.500V10H10" fill="none" stroke="#000" /></svg>
          <svg width="13" height="13"><path d="M.5.5l12 12M12.500.5l-12 12" stroke="#000" strokeWidth="1.200" /></svg>
        </WinButtons>
      </TitleBar>
      <MenuBar>
        <Icon n="doc" s={19} />
        {menus.map(([u, t, g, w], i) => <MenuItem key={i} $gap={g}><Fit w={w}><u>{u}</u>{t}</Fit></MenuItem>)}
        <MdiButtons>
          <MdiButton><svg width="12" height="12"><path d="M1 9.500h8" stroke="#7d8b9c" strokeWidth="2.200" /></svg></MdiButton>
          <MdiButton><svg width="12" height="12"><path d="M1.500 6h6v4.500h-6zM4 4V1.500h7V7H9" fill="none" stroke="#7d8b9c" strokeWidth="1.600" /></svg></MdiButton>
          <MdiButton><svg width="12" height="12"><path d="M2 2l8 8M10 2l-8 8" stroke="#7d8b9c" strokeWidth="2.600" /></svg></MdiButton>
        </MdiButtons>
      </MenuBar>
      <Toolbars><Tools spec={row1} /><Tools spec={row2} /><Tools spec={row3} /></Toolbars>

      <Main>
        <Side>
          <Head w={99}>Project Manager</Head>
          <Frame $h={291} $mt={7}>
            <Well>
              <View>
                <Tree>
                  {tree.map(([g, ic, label, w, b], i) => (
                    <Row key={i} $b={b}>
                      {g.split("").map((k, j) => (
                        <Guide key={j} $k={k}>{"pmx".includes(k) && <Expander $plus={k === "p"} />}</Guide>
                      ))}
                      <IconSlot><Icon n={ic} s={19} /></IconSlot>
                      <Fit w={w}>{label}</Fit>
                    </Row>
                  ))}
                </Tree>
              </View>
              <VScroll><Chevron r={0} /><Thumb $h={144} $m="0 0 48px" /><Chevron r={180} /></VScroll>
              <HScroll><Chevron r={-90} /><Thumb $w={184} $m="0 25px 0 11px" /><Chevron r={90} /></HScroll>
            </Well>
          </Frame>
          <Tabs><Tab $w={64} $on><Fit w={46}>Project</Fit></Tab></Tabs>
          <Splitter />
          <Head w={62}>Properties</Head>
          <Frame $h={293} $mt={6}>
            <Well>
              <View>
                <Grid>
                  <HeadCell><Fit w={39}>Name</Fit></HeadCell><HeadCell><Fit w={37}>Value</Fit></HeadCell>
                  <HeadCell><Fit w={28}>Unit</Fit></HeadCell><HeadCell><Fit w={68}>Evaluated '</Fit></HeadCell>
                  {props.map(([n, w, v, pink], i) => (
                    <React.Fragment key={i}>
                      <Cell $pink={pink}>{n && <Fit w={w}>{n}</Fit>}</Cell>
                      <Cell $pink={pink} $c={typeof v !== "string"}>{v}</Cell>
                      <Cell $pink={pink} /><Cell $pink={pink} />
                    </React.Fragment>
                  ))}
                </Grid>
              </View>
              <VScroll><Chevron r={0} /><Thumb $h={103} $m="0 0 114px" /><Chevron r={180} /></VScroll>
              <HScroll><Chevron r={-90} /><Thumb $w={181} $m="0 33px 0 6px" /><Chevron r={90} /></HScroll>
            </Well>
          </Frame>
          <Tabs>
            <Tab $w={77} $on><Fit w={60}>X Marker</Fit></Tab>
            <Tab $w={74}><Fit w={61}>Cartesian</Fit></Tab>
            <Tab $w={63}><Fit w={50}>General</Fit></Tab>
          </Tabs>
        </Side>
        <PlotFrame>
          <Chart />
          <Overlay $x={326.500} $y={173}>
            <MarkerTable>
              <div>Name</div><div>X</div><div>Y</div>
              {[["1", "2.4000", "-4.5479"], ["2", "2.4840", "-9.7932"], ["3", "5.1500", "-20.4867"], ["4", "5.3000", "-3.1579"]].map(([m, x, y]) => (
                <React.Fragment key={m}>
                  <div><MTag>m{m === "1" ? m : <i>{m}</i>}</MTag></div>
                  <div><Fit w={42}>{x}</Fit></div>
                  <div><Fit w={y.length > 7 ? 54 : 47}>{y}</Fit></div>
                </React.Fragment>
              ))}
            </MarkerTable>
          </Overlay>
          <Overlay $x={515} $y={206}><Tip><Fit w={108}>Space Click to sort</Fit></Tip></Overlay>
          <Overlay $x={1776.500} $y={199}>
            <Legend>
              <LegendHead><Fit w={66}>Curve Info</Fit></LegendHead>
              <LegendRow><Fit w={64}>dB(S(2,2))</Fit></LegendRow>
              <LegendNote><Fit w={97}>Setup1 : Sweep</Fit></LegendNote>
            </Legend>
          </Overlay>
        </PlotFrame>
      </Main>

      <Rule />
      <Dock $h={53} $pt={2} $pb={2}>
        <DockGrip><Cross s={8} /><Tri $d="down" $s={3} $c="#777" /><Vert>M</Vert></DockGrip>
        <DockBody $h={45}>
          <Messages>
            <Message><Warn /><MessageText><Fit w={640}>HFSSDesign1: Solutions have been invalidated, Undo to recover, (9:34:19 오전  12 05, 2019)</Fit></MessageText></Message>
            <Message><Warn /><MessageText><Fit w={623}>Adaptive Passes did not converge based on specified criteria, (9:34:55 오전  12 05, 2019)</Fit></MessageText></Message>
          </Messages>
          <Spin><SpinBtn><Tri $d="up" /></SpinBtn><SpinBtn><Tri $d="down" /></SpinBtn></Spin>
        </DockBody>
      </Dock>
      <Rule $mt={6} />
      <Dock $h={62} $pt={2} $pb={3}>
        <DockGrip><Cross s={8} /><Tri $d="down" $s={3} $c="#777" /><Vert>Pr(</Vert></DockGrip>
        <DockBody $h={53} />
      </Dock>
      <Status>
        <Fit w={112}>1 items selected.</Fit>
        <StatusCells>
          <Pane $w={44}>X</Pane><Pane $w={83} $edit><Fit w={47}>1.3410</Fit></Pane>
          <Pane $w={45}><Fit w={16}>Y1</Fit></Pane><Pane $w={82} $edit><Fit w={53}>-0.9309</Fit></Pane>
        </StatusCells>
      </Status>

      <Taskbar>
        <TaskItem $w={60}><svg width="21" height="21" viewBox="0 0 21 21"><path d="M0 3l9-1.300V10H0zM10 1.500L21 0v10H10zM0 11h9v8.300L0 18zM10 11h11v10l-11-1.500z" fill="#fff" /></svg></TaskItem>
        <TaskItem $w={60}><svg width="22" height="22" fill="none" stroke="#fff" strokeWidth="1.500"><circle cx="13.500" cy="8" r="6.500" /><path d="M9 13L1.500 21" /></svg></TaskItem>
        <TaskItem $w={61}><svg width="22" height="22" fill="none" stroke="#fff" strokeWidth="1.300"><path d="M1.500 6.500h12v9h-12zM1.500 1v3h12V1M1.500 21v-3h12v3M18.500 1v3M18.500 10v11" /><path d="M18.500 5v5" strokeWidth="3" /></svg></TaskItem>
        <TaskItem $w={67} $line={51}><svg width="28" height="25" viewBox="0 0 28 25"><path d="M0 1h10l2 3h14q2 0 2 2v16H0z" fill="#f7d774" /><path d="M0 6h28v16H0z" fill="#ffe79a" /><path d="M2 1.500h7v2H2z" fill="#e8a820" /><path d="M5 24V14h18v10h-4.500v-5h-9v5z" fill="#3aa7e0" /></svg></TaskItem>
        <TaskItem $w={57}><svg width="30" height="30" viewBox="0 0 30 30"><path d="M24.500 20a10.500 10.500 0 1 1 1.300-5.500H8" fill="none" stroke="#45c4f6" strokeWidth="4.600" /><path d="M4 28Q-2 24 8 12T27 2q3 1 0 7" fill="none" stroke="#f5c520" strokeWidth="2.400" /></svg></TaskItem>
        <TaskItem $w={65}><svg width="30" height="28" viewBox="0 0 30 28"><path d="M26 8A10.500 10 0 1 0 26 20" fill="none" stroke="#1ea6ee" strokeWidth="7" /></svg></TaskItem>
        <TaskItem $w={61} $on $line={61}><Ball w={30} h={30} /></TaskItem>
        <TaskItem $w={63} $line={51}><svg width="30" height="30" viewBox="0 0 30 30"><path d="M14 4C5 5 1 12 2 19s8 10 12 8c3-2 0-4 4-6s9-2 8-9S20 3 14 4z" fill="#cfe6f5" stroke="#7aa" /><circle cx="8" cy="12" r="2.500" fill="#e33" /><circle cx="14" cy="8.500" r="2.500" fill="#3b4" /><circle cx="20" cy="9" r="2.500" fill="#fb2" /><circle cx="7" cy="18" r="2.500" fill="#36c" /><path d="M17 28L25 7" stroke="#e08a20" strokeWidth="2.600" /><path d="M23.500 8l.5-7 5 3-3 5z" fill="#b98a5a" /></svg></TaskItem>
        <Tray>
          <TrayItem $w={44}><svg width="20" height="20" viewBox="0 0 20 20" fill="none" stroke="#fff" strokeWidth="1.500"><circle cx="13" cy="4" r="3.200" /><circle cx="6" cy="11" r="3" /><path d="M1 19q0-5 5-5t5 4M11 9q2-2 4-1.500 4 .5 4 4.500" /></svg></TrayItem>
          <TrayItem $w={46}><svg width="17" height="10"><path d="M1 9l7.500-7.500L16 9" fill="none" stroke="#fff" strokeWidth="1.500" /></svg></TrayItem>
          <TrayItem $w={14}><svg width="22" height="16" overflow="visible"><g><rect x="6" y="5.500" width="11" height="6" fill="#fff" /><path d="M5 3.500h14v10H4v-3M19 6.500h1.500v4H19" fill="none" stroke="#fff" /><path d="M0 3h5v3q-2.500 2-5 0zM1 3V0M4 3V0M2.500 7v3" stroke="#fff" fill="#222" /></g></svg></TrayItem>
          <TrayItem $w={46}><svg width="20" height="20" viewBox="0 0 20 20" fill="none"><path d="M4 10Q9 2 19 2M8 12Q11 6.500 19 6.500M11 16Q14 11 19 11" stroke="#888" strokeWidth="1.300" /><circle cx="18" cy="16" r="1.500" fill="#888" /><circle cx="6" cy="14" r="5.500" fill="#e02a2a" /><path d="M4 12l4 4M8 12l-4 4" stroke="#fff" strokeWidth="1.300" /></svg></TrayItem>
          <TrayItem $w={15}><svg width="19" height="16" overflow="visible" fill="none" stroke="#fff" strokeWidth="1.300"><path d="M1 5h3l4-4v14l-4-4H1zM11 5l7 7M18 5l-7 7" /></svg></TrayItem>
          <TrayItem $w={46}><svg width="16" height="18"><path d="M1 17.500L8 1l7 16.500M3.500 11.500h9" fill="none" stroke="#fff" strokeWidth="2" /></svg></TrayItem>
          <Clock><Fit w={61}>오전 9:36</Fit><Fit w={76}>2019-12-05</Fit></Clock>
          <TrayItem $w={69}><Notice><svg width="20" height="19"><path d="M0 0h20v15H8l-4 4v-4H0z" fill="#fff" /><path d="M3.500 4.500h13M3.500 8h13M3.500 11.500h8" stroke="#222" strokeWidth="1.300" /></svg><Badge>2</Badge></Notice></TrayItem>
          <ShowDesktop />
        </Tray>
      </Taskbar>
    </Screen>
  );
}
